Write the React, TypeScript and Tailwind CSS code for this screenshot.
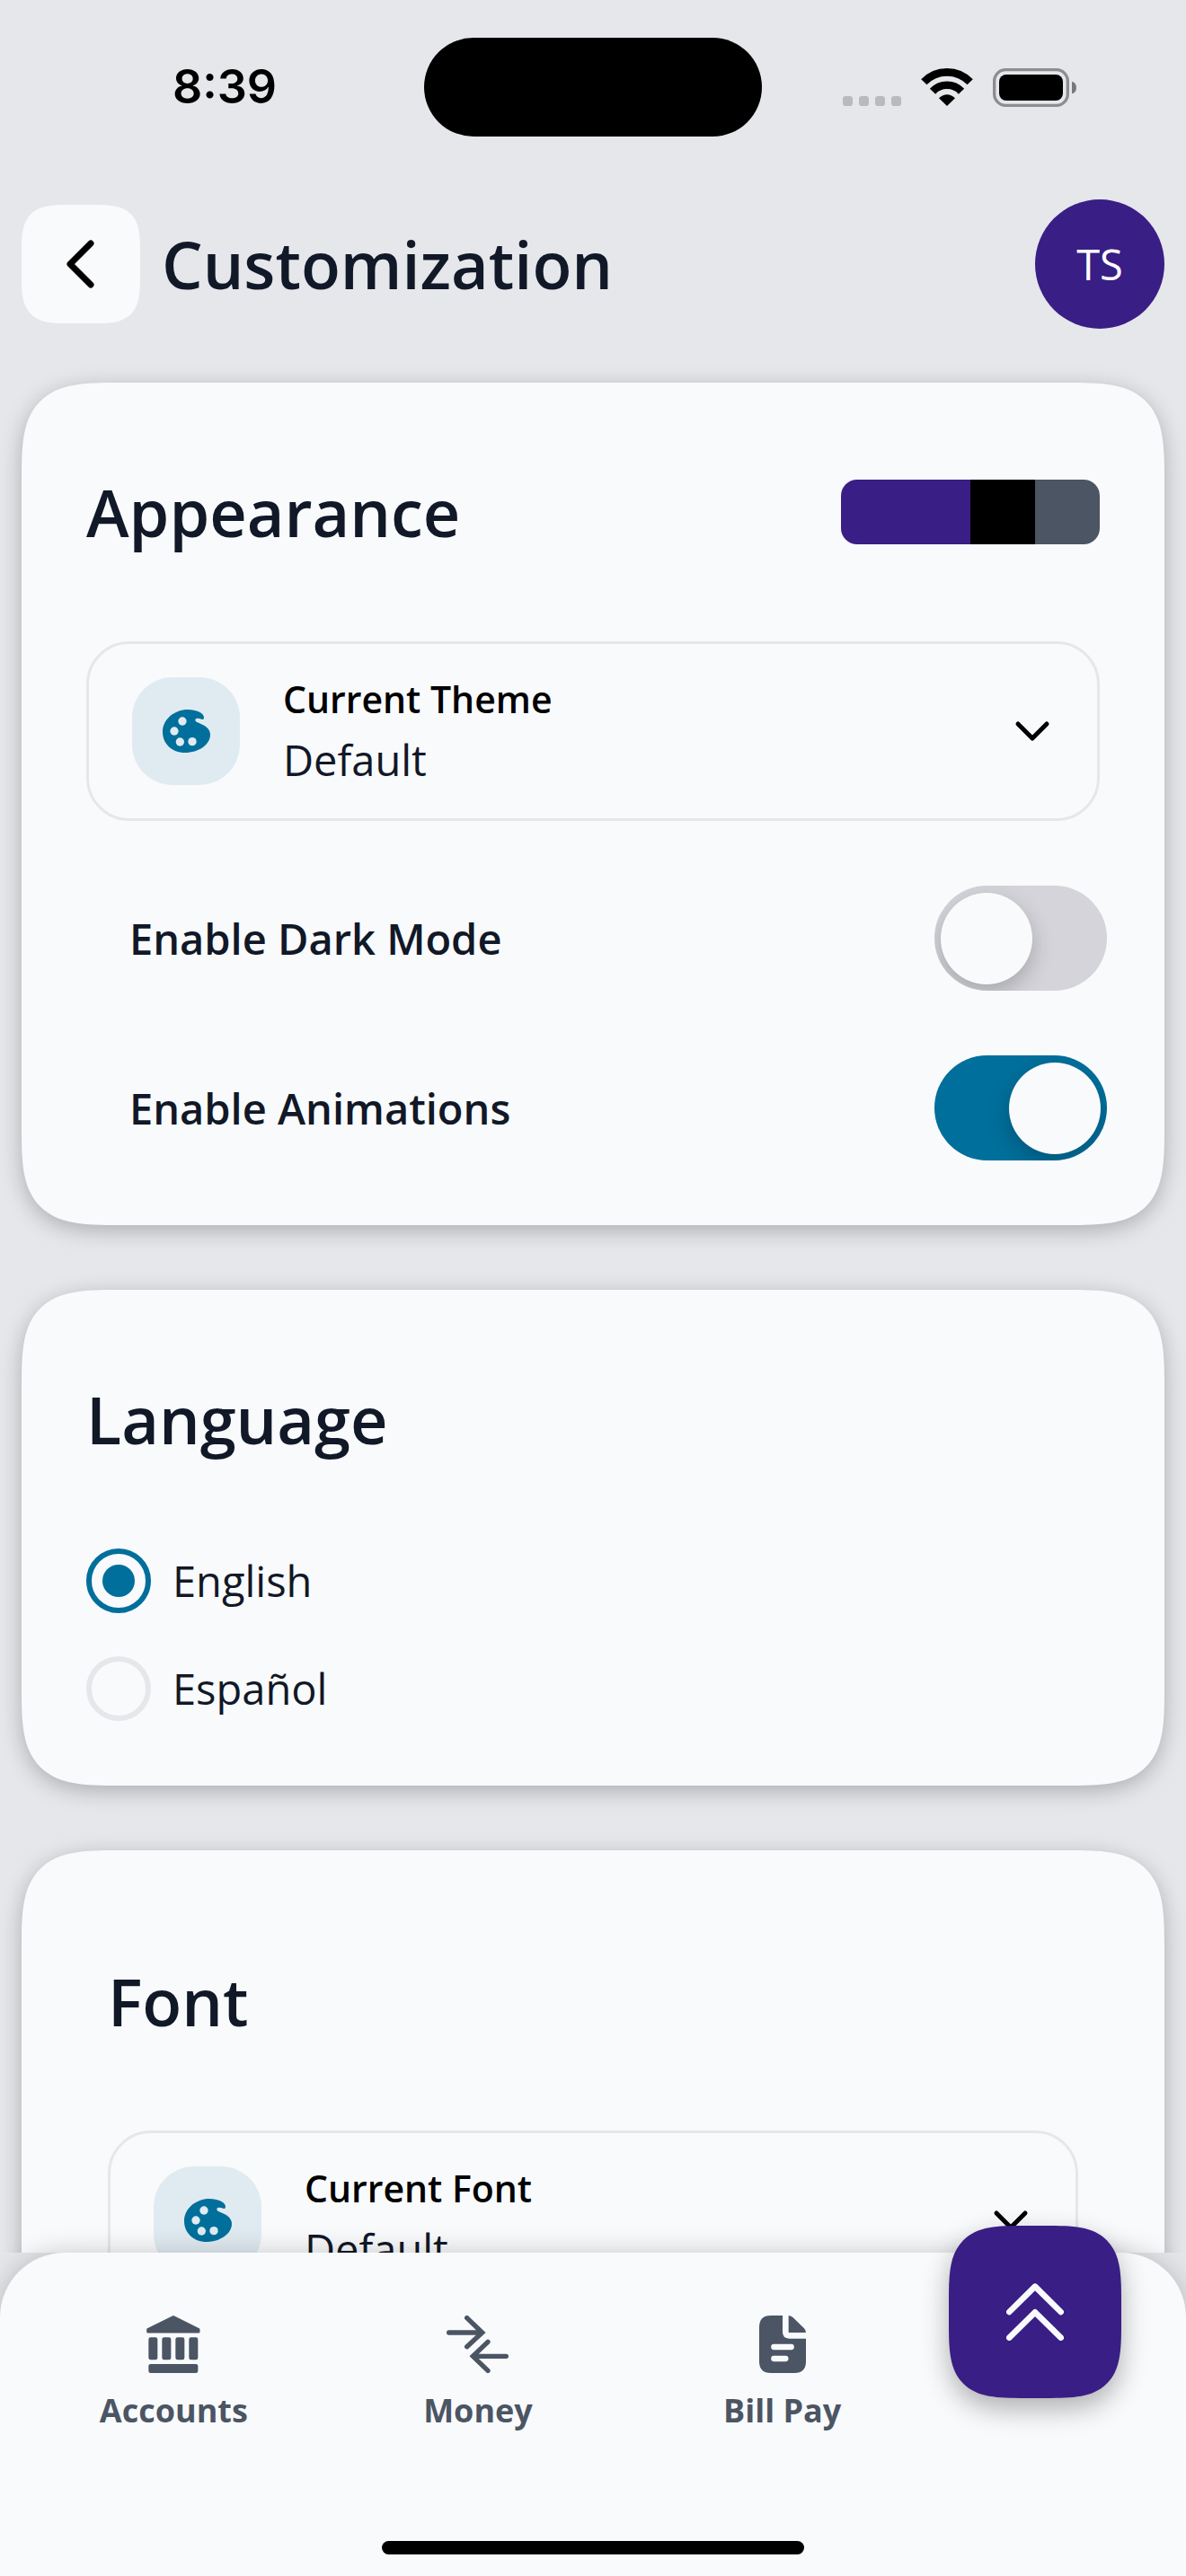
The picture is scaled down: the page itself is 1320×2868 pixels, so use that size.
import { useId, useState } from "react";
import type { ReactNode } from "react";

function CellularDots() {
  return (
    <svg className="mb-px h-[11px] w-[65px]" viewBox="0 0 195 33" aria-hidden="true">
      {[0, 54, 108, 162].map((x) => (
        <rect key={x} x={x} y="0" width="33" height="33" rx="10" fill="#b8babe" />
      ))}
    </svg>
  );
}

function WifiIcon() {
  return (
    <svg className="mb-px h-[42px] w-[58px]" viewBox="374 75 174 126" aria-hidden="true">
      <g fill="none" stroke="#000" strokeWidth="26">
        <path d="M384 121 A107 107 0 0 1 538 121" />
        <path d="M413 152 A66 66 0 0 1 509 152" />
      </g>
      <path d="M461 201 L434 175 Q461 150 488 175 Z" />
    </svg>
  );
}

function BatteryIcon() {
  return (
    <svg className="h-[43px] w-[93px]" viewBox="615 75 279 129" aria-hidden="true">
      <rect x="620" y="80" width="245" height="119" rx="38" fill="none" stroke="#8c8d8f" strokeWidth="10" />
      <rect x="636" y="96" width="213" height="87" rx="24" />
      <path d="M879 119 Q894 124 894 140 Q894 156 879 160 Z" fill="#77787a" />
    </svg>
  );
}

function BackChevron() {
  return (
    <svg className="h-14 w-8" viewBox="0 0 32 56" fill="none" stroke="#000" strokeWidth="7" strokeLinecap="round" strokeLinejoin="round" aria-hidden="true">
      <path d="M27 5 L4 28 L27 51" />
    </svg>
  );
}

function ChevronDown() {
  return (
    <svg className="pointer-events-none size-12" viewBox="0 0 48 48" fill="none" stroke="#000" strokeWidth="5" strokeLinecap="round" strokeLinejoin="round" aria-hidden="true">
      <path d="M8 16 L24 32 L40 16" />
    </svg>
  );
}

function PaletteIcon() {
  return (
    <svg className="h-12 w-[53px]" viewBox="120 153 159 144" aria-hidden="true">
      <path
        fill="#006f9c"
        d="M204 153 C232 153 258 165 258 179 C258 187 252 187 246 184 C239 181 230 181 229 187 C228 193 236 196 246 200 C264 207 279 218 279 237 C279 270 240 297 195 297 C150 297 120 266 120 228 C120 185 160 153 204 153 Z"
      />
      <g fill="#e0ebf1">
        <circle cx="186" cy="192" r="14" />
        <circle cx="159" cy="225" r="14" />
        <circle cx="178" cy="261" r="14" />
        <circle cx="219" cy="260" r="14" />
      </g>
    </svg>
  );
}

function BankIcon() {
  return (
    <svg className="h-16 w-[60px]" viewBox="254 114 180 192" fill="currentColor" aria-hidden="true">
      <path d="M344 119 L428 161 V168 H259 V161 Z" stroke="currentColor" strokeWidth="9" strokeLinejoin="round" />
      {[261, 306, 351, 396].map((x) => (
        <rect key={x} x={x} y="187" width="30" height="75" rx="7" />
      ))}
      <rect x="261" y="276" width="165" height="30" rx="7" />
    </svg>
  );
}

function TransferIcon() {
  return (
    <svg className="h-16 w-[69px]" viewBox="1256 114 207 192" fill="none" stroke="currentColor" strokeWidth="16" strokeLinecap="round" aria-hidden="true">
      <path d="M1264 171 H1372" />
      <path d="M1324 122 L1375 171 L1324 218" />
      <path d="M1455 250 H1348" />
      <path d="M1394 202 L1344 250 L1394 298" />
    </svg>
  );
}

function BillIcon() {
  return (
    <svg className="h-16 w-[52px]" viewBox="195 354 156 192" fill="currentColor" aria-hidden="true">
      <path d="M273 354 H234 Q195 354 195 393 V507 Q195 546 234 546 H312 Q351 546 351 507 V431 H295 Q273 431 273 409 Z" />
      <path d="M293 354 Q302 355 308 361 L345 397 Q351 403 351 411 H293 Z" />
      <g stroke="#f9fafc" strokeWidth="19" strokeLinecap="round">
        <path d="M244 459 H302" />
        <path d="M244 498 H283" />
      </g>
    </svg>
  );
}

function DoubleChevronUp() {
  return (
    <svg className="size-16" viewBox="0 0 192 192" fill="none" stroke="#f9fafc" strokeWidth="20" strokeLinecap="round" strokeLinejoin="round" aria-hidden="true">
      <path d="M10 96 L96 11 L182 96" />
      <path d="M10 182 L96 97 L182 182" />
    </svg>
  );
}

function Card({ inset, children }: { inset?: boolean; children: ReactNode }) {
  return (
    <section
      className={
        inset
          ? "flex flex-col gap-[72px] rounded-[72px] bg-[#f9fafc] p-24 shadow-[0_6px_24px_rgba(0,0,0,0.25)] supports-[corner-shape:squircle]:rounded-[108px] supports-[corner-shape:squircle]:[corner-shape:superellipse(1.7)]"
          : "flex flex-col gap-[72px] rounded-[72px] bg-[#f9fafc] p-[72px] shadow-[0_6px_24px_rgba(0,0,0,0.25)] supports-[corner-shape:squircle]:rounded-[108px] supports-[corner-shape:squircle]:[corner-shape:superellipse(1.7)]"
      }
    >
      {children}
    </section>
  );
}

function CardHeader({ title, children }: { title: string; children?: ReactNode }) {
  return (
    <div className="flex h-36 items-center justify-between">
      <h2 className="text-[72px] leading-none font-semibold">{title}</h2>
      {children}
    </div>
  );
}

function Picker({ label, options }: { label: string; options: string[] }) {
  const id = useId();
  return (
    <div className="flex items-center gap-12 rounded-[48px] border-3 border-[#e5e7eb] px-12 py-[29px]">
      <div className="flex size-[120px] items-center justify-center rounded-[45px] bg-[#e0ebf1]">
        <PaletteIcon />
      </div>
      <div className="flex flex-1 flex-col">
        <label htmlFor={id} className="text-[41px] leading-[64px] font-semibold text-black">
          {label}
        </label>
        <select id={id} className="h-[72px] w-full appearance-none bg-transparent text-[47px] leading-[72px] outline-none">
          {options.map((o) => (
            <option key={o}>{o}</option>
          ))}
        </select>
      </div>
      <ChevronDown />
    </div>
  );
}

function Toggle({ label, initial }: { label: string; initial: boolean }) {
  const [on, setOn] = useState(initial);
  return (
    <label className="flex items-center justify-between text-[47px] leading-[72px] font-semibold">
      {label}
      <input
        type="checkbox"
        role="switch"
        checked={on}
        onChange={(e) => setOn(e.target.checked)}
        className="flex h-[117px] w-48 appearance-none items-center overflow-hidden rounded-full bg-[#d4d4da] px-[7px] before:size-[102px] before:rounded-full before:bg-[#f9fafc] before:shadow-[0_9px_24px_rgba(0,0,0,0.22)] checked:justify-end checked:bg-[#006f9c]"
      />
    </label>
  );
}

function LanguageOption({ label, checked, onSelect }: { label: string; checked: boolean; onSelect: () => void }) {
  return (
    <label className="flex items-center gap-6 text-[47px] leading-[72px]">
      <input
        type="radio"
        name="language"
        checked={checked}
        onChange={onSelect}
        className="flex size-[72px] appearance-none items-center justify-center rounded-full border-6 border-[#e5e7eb] checked:border-[#006f9c] checked:before:size-9 checked:before:rounded-full checked:before:bg-[#006f9c]"
      />
      {label}
    </label>
  );
}

function NavLink({ label, icon }: { label: string; icon: ReactNode }) {
  return (
    <a href="#" className="flex flex-col items-center gap-[18px] pt-[70px] text-[36px] leading-[48px] font-bold text-[#4b5563]">
      {icon}
      {label}
    </a>
  );
}

export default function App() {
  const [language, setLanguage] = useState("English");
  return (
    <div className="flex h-screen flex-col bg-[#e5e7eb] font-['Open_Sans',sans-serif] text-[#111827]">
      <div className="grid grid-cols-[1fr_376px_1fr] items-center pt-[42px] pb-[34px]">
        <time className="pl-7 text-center font-['Inter',sans-serif] text-[52px] leading-none font-semibold text-black">8:39</time>
        <div className="h-[110px] rounded-full bg-black" />
        <div className="flex items-end justify-center gap-[22px] pr-8">
          <CellularDots />
          <WifiIcon />
          <BatteryIcon />
        </div>
      </div>

      <header className="flex items-center gap-6 px-6 py-9">
        <button aria-label="Back" className="flex size-[132px] items-center justify-center rounded-[38px] bg-[#f9fafc] supports-[corner-shape:squircle]:rounded-[54px] supports-[corner-shape:squircle]:[corner-shape:superellipse(1.7)]">
          <BackChevron />
        </button>
        <h1 className="flex-1 text-[72px] leading-none font-semibold">Customization</h1>
        <button aria-label="Profile" className="flex size-36 items-center justify-center rounded-full bg-[#391e85] text-[47px] leading-none font-medium text-white">
          TS
        </button>
      </header>

      <main className="flex min-h-0 flex-1 flex-col gap-[72px] overflow-y-auto px-6 pt-6 [scrollbar-width:none] *:shrink-0">
        <Card>
          <CardHeader title="Appearance">
            <div className="flex h-[72px] overflow-hidden rounded-[18px]">
              <div className="w-36 bg-[#391e85]" />
              <div className="w-[72px] bg-black" />
              <div className="w-[72px] bg-[#4b5563]" />
            </div>
          </CardHeader>
          <Picker label="Current Theme" options={["Default"]} />
          <div className="-mr-2 flex flex-col gap-[72px] pl-12">
            <Toggle label="Enable Dark Mode" initial={false} />
            <Toggle label="Enable Animations" initial={true} />
          </div>
        </Card>

        <Card>
          <CardHeader title="Language" />
          <div role="radiogroup" aria-label="Language" className="flex flex-col gap-12">
            {["English", "Español"].map((l) => (
              <LanguageOption key={l} label={l} checked={language === l} onSelect={() => setLanguage(l)} />
            ))}
          </div>
        </Card>

        <Card inset>
          <CardHeader title="Font" />
          <Picker label="Current Font" options={["Default"]} />
        </Card>
      </main>

      <nav className="relative z-10 flex flex-col rounded-t-[72px] bg-[#f9fafc] pb-6 shadow-[0_0_30px_rgba(0,0,0,0.2)]">
        <div className="flex items-start gap-4 pr-[72px] pl-6">
          <div className="grid flex-1 grid-cols-3">
            <NavLink label="Accounts" icon={<BankIcon />} />
            <NavLink label="Money" icon={<TransferIcon />} />
            <NavLink label="Bill Pay" icon={<BillIcon />} />
          </div>
          <button
            aria-label="More"
            className="-mt-[30px] flex size-48 items-center justify-center rounded-[58px] bg-[#391e85] shadow-[0_12px_30px_rgba(0,0,0,0.3)] supports-[corner-shape:squircle]:rounded-[84px] supports-[corner-shape:squircle]:[corner-shape:superellipse(1.7)]"
          >
            <DoubleChevronUp />
          </button>
        </div>
        <div className="mt-[121px] h-[15px] w-[470px] self-center rounded-full bg-black" />
      </nav>
    </div>
  );
}
